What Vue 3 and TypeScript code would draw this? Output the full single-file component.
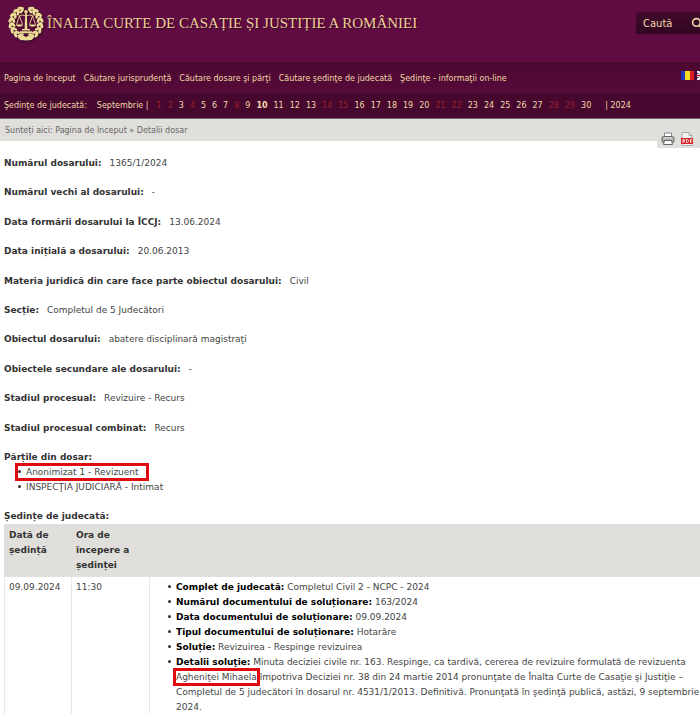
<script setup lang="ts">
interface Field {
  label: string
  value: string
}

const menu: string[] = [
  'Pagina de început',
  'Căutare jurisprudență',
  'Căutare dosare şi părţi',
  'Căutare şedinţe de judecată',
  'Şedinţe - informaţii on-line',
]

const days: number[] = Array.from({ length: 30 }, (_, i) => i + 1)
const closedDays = new Set<number>([1, 2, 4, 8, 14, 15, 21, 22, 28, 29])
const currentDay = 10

const fields: Field[] = [
  { label: 'Numărul dosarului:', value: '1365/1/2024' },
  { label: 'Numărul vechi al dosarului:', value: '-' },
  { label: 'Data formării dosarului la ÎCCJ:', value: '13.06.2024' },
  { label: 'Data inițială a dosarului:', value: '20.06.2013' },
  { label: 'Materia juridică din care face parte obiectul dosarului:', value: 'Civil' },
  { label: 'Secție:', value: 'Completul de 5 Judecători' },
  { label: 'Obiectul dosarului:', value: 'abatere disciplinară magistraţi' },
  { label: 'Obiectele secundare ale dosarului:', value: '-' },
  { label: 'Stadiul procesual:', value: 'Revizuire - Recurs' },
  { label: 'Stadiul procesual combinat:', value: 'Recurs' },
]

const details: Field[] = [
  { label: 'Complet de judecată:', value: 'Completul Civil 2 - NCPC - 2024' },
  { label: 'Numărul documentului de soluționare:', value: '163/2024' },
  { label: 'Data documentului de soluționare:', value: '09.09.2024' },
  { label: 'Tipul documentului de soluționare:', value: 'Hotarâre' },
  { label: 'Soluție:', value: 'Revizuirea - Respinge revizuirea' },
]

const leafAngles: number[] = [18, 38, 58, 78, 98, 118, 138, 156]
</script>

<template>
  <div class="page">
    <header class="banner">
      <a class="brand" href="#">
        <svg class="emblem" viewBox="0 0 36 36" aria-hidden="true">
          <g fill="#ecdb96">
            <g v-for="a in leafAngles" :key="a">
              <g :transform="`rotate(${a} 18 18)`">
                <ellipse cx="16.8" cy="33.6" rx="3.200" ry="1.600" transform="rotate(28 16.8 33.6)" />
                <ellipse cx="17" cy="30.7" rx="2.8" ry="1.400" transform="rotate(-28 17 30.7)" />
              </g>
              <g :transform="`rotate(${-a} 18 18)`">
                <ellipse cx="19.2" cy="33.6" rx="3.200" ry="1.600" transform="rotate(-28 19.2 33.6)" />
                <ellipse cx="19" cy="30.7" rx="2.8" ry="1.400" transform="rotate(28 19 30.7)" />
              </g>
            </g>
            <path d="M11 32.500l4-2 3 1.500 3-1.500 4 2-2 2.500-5 .5-5-.5z" />
            <circle cx="18" cy="6.8" r="1.8" />
            <path d="M17.2 8h1.6l.6 16h-2.8zM14 24h8v1.5h-8zM12 26.3h12v2H12z" />
            <path d="M8 19.5h7c-.5 3-6.500 3-7 0zM21 19.500h7c-.5 3-6.500 3-7 0z" />
          </g>
          <path d="M10.500 11q4-2 7.500 0 3.500-2 7.500 0M11.500 11l-3 8.500M11.500 11l3 8.500M24.500 11l-3 8.500M24.500 11l3 8.500" fill="none" stroke="#ecdb96" stroke-width=".9" />
        </svg>
        <span class="title">ÎNALTA CURTE DE CASAȚIE ȘI JUSTIȚIE A ROMÂNIEI</span>
      </a>
      <form class="search" @submit.prevent>
        <input type="text" placeholder="Caută" aria-label="Caută" />
        <button type="submit" aria-label="Caută">
          <svg viewBox="0 0 12 12" aria-hidden="true">
            <circle cx="5" cy="5" r="3.500" fill="none" stroke="#f0d9a8" stroke-width="1.500" />
            <path d="M7.500 7.500l3.500 3.500" stroke="#f0d9a8" stroke-width="2" />
          </svg>
        </button>
      </form>
    </header>

    <nav class="menu">
      <a v-for="item in menu" :key="item" href="#">{{ item }}</a>
      <span class="flags">
        <a href="#" aria-label="Română">
          <svg viewBox="0 0 13 9"><path fill="#2439b5" d="M0 0h4v9H0z" /><path fill="#f8df24" d="M4 0h5v9H4z" /><path fill="#db1c24" d="M9 0h4v9H9z" /></svg>
        </a>
        <a href="#" aria-label="English">
          <svg viewBox="0 0 13 9"><path fill="#41549b" d="M0 0h13v9H0z" /><path d="M0 0l13 9M13 0L0 9" stroke="#fff" stroke-width="2" /><path d="M6.500 0v9M0 4.500h13" stroke="#fff" stroke-width="3" /><path d="M6.500 0v9M0 4.500h13" stroke="#c8102e" stroke-width="1.500" /></svg>
        </a>
      </span>
    </nav>

    <nav class="calendar">
      <span class="caption">Şedinţe de judecată:</span>
      <span class="month">Septembrie |</span>
      <a
        v-for="d in days"
        :key="d"
        href="#"
        :class="{ closed: closedDays.has(d), current: d === currentDay }"
      >{{ d }}</a>
      <span class="year">| 2024</span>
    </nav>

    <div class="crumbs">
      <span class="trail">Sunteți aici: <a href="#">Pagina de început</a> » Detalii dosar</span>
      <div class="tools">
        <button type="button" aria-label="Tipărire">
          <svg viewBox="0 0 14 14">
            <path d="M3.500 1h7v4h-7z" fill="#fff" stroke="#888" />
            <rect x="1" y="4.500" width="12" height="6" rx="1.500" fill="#aaa" stroke="#666" />
            <path d="M2.500 6h9" stroke="#eee" />
            <path d="M3.500 8.500h7l1 4h-9z" fill="#fff" stroke="#666" />
          </svg>
        </button>
        <button type="button" aria-label="PDF">
          <svg viewBox="0 0 14 14">
            <path d="M2 .5h7l3 3v10H2z" fill="#f5f5f5" stroke="#aaa" />
            <path d="M9 .5v3h3" fill="#ddd" stroke="#aaa" />
            <path d="M1 6h12v6H1z" fill="#d8262c" />
            <path d="M3 11V7.500h1.500v2H3M6.500 7.500v3h1l1-1v-1l-1-1zM10.500 11V7.500H12M10.500 9H12" fill="none" stroke="#fff" stroke-width=".8" />
          </svg>
        </button>
      </div>
    </div>

    <main class="content">
      <dl class="fields">
        <div v-for="f in fields" :key="f.label" class="field">
          <dt>{{ f.label }}</dt>
          <dd>{{ f.value }}</dd>
        </div>
      </dl>

      <section class="parties">
        <h2>Părțile din dosar:</h2>
        <ul>
          <li><span class="marked">Anonimizat 1 - Revizuent<i class="frame wide"></i></span></li>
          <li>INSPECŢIA JUDICIARĂ - Intimat</li>
        </ul>
      </section>

      <section class="hearings">
        <h2>Ședințe de judecată:</h2>
        <table>
          <thead>
            <tr>
              <th class="date">Dată de ședință</th>
              <th class="hour">Ora de începere a ședinței</th>
              <th></th>
            </tr>
          </thead>
          <tbody>
            <tr>
              <td>09.09.2024</td>
              <td>11:30</td>
              <td class="solution">
                <ul>
                  <li v-for="d in details" :key="d.label"><b>{{ d.label }}</b> {{ d.value }}</li>
                  <li>
                    <b>Detalii soluţie:</b> Minuta deciziei civile nr. 163. Respinge, ca tardivă, cererea de
                    revizuire formulată de revizuenta <span class="marked">Agheniţei Mihaela<i class="frame"></i></span>
                    împotriva Deciziei nr. 38 din 24 martie 2014 pronunţate de Înalta Curte de Casaţie şi
                    Justiţie – Completul de 5 judecători în dosarul nr. 4531/1/2013. Definitivă. Pronunţată în
                    şedinţă publică, astăzi, 9 septembrie 2024.
                  </li>
                </ul>
              </td>
            </tr>
          </tbody>
        </table>
      </section>
    </main>
  </div>
</template>

<style>
body {
  background: #fff;
  overflow: hidden;
}
</style>

<style scoped>
.page {
  font-family: "DejaVu Sans", Verdana, sans-serif;
  font-size: 9px;
  line-height: 15px;
  color: #444;
  overflow: hidden;
}
a {
  color: inherit;
  text-decoration: none;
}
button {
  display: flex;
  padding: 0;
  border: 0;
  background: none;
}
.banner {
  display: flex;
  justify-content: space-between;
  align-items: flex-start;
  height: 62px;
  background: #600c43;
}
.brand {
  display: flex;
  gap: 3px;
  padding: 4px 0 0 8px;
}
.emblem {
  width: 36px;
  height: 38px;
  filter: drop-shadow(1px 1px 1px #30051f);
}
.title {
  padding-top: 9px;
  font-family: "Liberation Serif", serif;
  font-size: 15px;
  line-height: 20px;
  color: #edcf9c;
  text-shadow: 1px 1px 1px #30051f;
  white-space: nowrap;
}
.search {
  display: flex;
  align-items: center;
  width: 64px;
  height: 22px;
  margin-top: 12px;
  background: linear-gradient(#420a2d, #300620);
}
.search input {
  flex: none;
  box-sizing: border-box;
  width: 55px;
  height: 22px;
  padding: 0 7px;
  border: 0;
  background: none;
  color: #f0d9a8;
  font: 10px "DejaVu Sans", sans-serif;
}
.search input::placeholder {
  color: #f0d9a8;
  opacity: 1;
}
.search svg {
  width: 13px;
  height: 13px;
}
.menu {
  display: flex;
  align-items: center;
  gap: 8px;
  box-sizing: border-box;
  height: 31px;
  padding: 2px 0 0 4px;
  background: linear-gradient(#4b092f, #570a3a);
  color: #f0d9a8;
  font-size: 8px;
  white-space: nowrap;
}
.flags {
  display: flex;
  gap: 3px;
  margin: 0 -10px 6px auto;
}
.flags a {
  display: flex;
}
.flags svg {
  width: 13px;
  height: 9px;
}
.calendar {
  display: flex;
  align-items: center;
  gap: 6px;
  height: 25px;
  padding-left: 4px;
  border-bottom: 1px solid #776071;
  background: #47082f;
  color: #f0d9a8;
  font-size: 8px;
  white-space: nowrap;
}
.caption {
  margin-right: 4px;
}
.month {
  margin-right: 2px;
}
.closed {
  color: #96202d;
}
.current {
  font-weight: bold;
}
.year {
  margin-left: 8px;
}
.crumbs {
  display: flex;
  justify-content: space-between;
  height: 22px;
  padding-left: 5px;
  background: #e0dfdb;
  color: #666;
  font-size: 8px;
}
.trail {
  padding-top: 4px;
}
.tools {
  display: flex;
  gap: 5px;
  align-items: center;
  box-sizing: border-box;
  height: 29px;
  padding: 10px 6px 0 4px;
  background: #e0dfdb;
}
.tools svg {
  width: 14px;
  height: 14px;
}
.content {
  padding: 15px 0 0 4px;
}
.fields {
  display: grid;
  grid-auto-rows: 1fr;
  min-height: 294px;
  margin: 0;
}
.field {
  display: flex;
  gap: 8px;
}
dt,
h2 {
  font-weight: bold;
  color: #333;
}
dd {
  margin: 0;
}
h2 {
  margin: 0;
  font-size: 9px;
}
ul {
  margin: 0;
  padding-left: 22px;
  list-style: none;
}
li::before {
  content: "";
  display: inline-block;
  width: 3px;
  height: 3px;
  margin: 0 5px 0 -8px;
  border-radius: 50%;
  background: #333;
  vertical-align: 2px;
}
.parties {
  padding-bottom: 14px;
}
.marked {
  position: relative;
  white-space: nowrap;
}
.frame {
  position: absolute;
  inset: -4px -3px;
  border: 3px solid #e00b0f;
}
.frame.wide {
  left: -11px;
  right: -10px;
}
table {
  width: 100%;
  border-collapse: collapse;
}
th,
td {
  padding: 3px 4px;
  border: 1px solid #e9e8e5;
  text-align: left;
  vertical-align: top;
}
th {
  background: #e0dfdb;
  border-color: #e0dfdb;
  color: #333;
}
.date {
  width: 58px;
}
.hour {
  width: 69px;
}
.solution {
  padding-right: 0;
  border-right: 0;
}
td b {
  color: #000;
}
</style>
